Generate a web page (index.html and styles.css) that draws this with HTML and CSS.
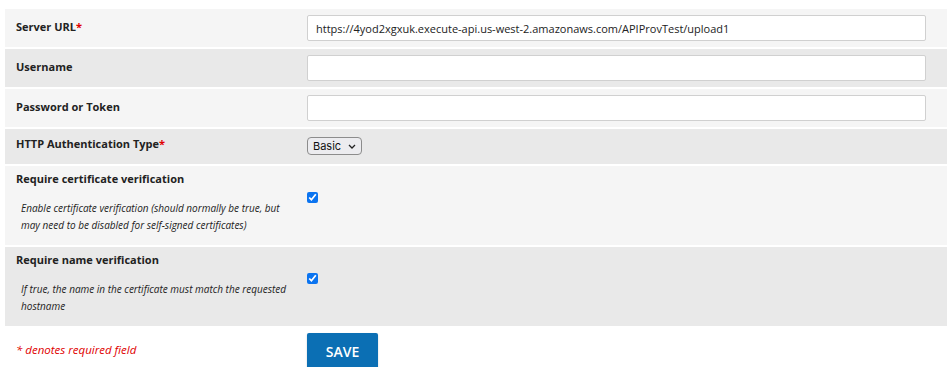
FILE: index.html
```html
<!DOCTYPE html>
<html lang="en">
<head>
    <meta charset="UTF-8">
    <title>Endpoint settings</title>
    <link rel="stylesheet" href="styles.css">
</head>
<body>
    <form class="settings">
        <div class="row light">
            <div class="label">Server URL<span class="req">*</span></div>
            <div class="field"><input class="text" type="text" value="https://4yod2xgxuk.execute-api.us-west-2.amazonaws.com/APIProvTest/upload1"></div>
        </div>

        <div class="row dark">
            <div class="label">Username</div>
            <div class="field"><input class="text" type="text"></div>
        </div>

        <div class="row light">
            <div class="label">Password or Token</div>
            <div class="field"><input class="text" type="password"></div>
        </div>

        <div class="row dark auth">
            <div class="label">HTTP Authentication Type<span class="req">*</span></div>
            <div class="field">
                <div class="select-wrap">
                    <select class="select">
                        <option>Basic</option>
                        <option>Digest</option>
                    </select>
                    <svg class="chevron" width="8" height="5" viewBox="0 0 8 5"><path d="M1 1l3 3 3-3" fill="none" stroke="#222" stroke-width="1.3"/></svg>
                </div>
            </div>
        </div>

        <div class="row light check">
            <div class="label">
                Require certificate verification
                <div class="desc">Enable certificate verification (should normally be true, but may need to be disabled for self-signed certificates)</div>
            </div>
            <div class="field"><input class="box" type="checkbox" checked></div>
        </div>

        <div class="row dark check">
            <div class="label">
                Require name verification
                <div class="desc">If true, the name in the certificate must match the requested hostname</div>
            </div>
            <div class="field"><input class="box" type="checkbox" checked></div>
        </div>

        <div class="row footer">
            <div class="label note">* denotes required field</div>
            <div class="field"><button class="btn-save" type="button">SAVE</button></div>
        </div>
    </form>
</body>
</html>
```

FILE: styles.css
```css
body {
    font-family: 'Open Sans', 'Noto Sans', sans-serif;
    margin: 0;
    padding: 0;
    background-color: #fff;
    color: #222;
}

.settings {
    padding: 9px 0 0 5px;
}

.row {
    display: grid;
    grid-template-columns: 302px 1fr;
    align-items: center;
    padding: 6px 21px 6px 0;
    margin-bottom: 2px;
}

.row.light {
    background-color: #f5f5f5;
}

.row.dark {
    background-color: #e9e9e9;
}

.label {
    padding: 0 0 4px 11px;
    font-size: 11px;
    line-height: 15px;
    font-weight: 700;
}

.field {
    display: flex;
    align-items: flex-start;
}

.req {
    color: #e00000;
}

.text {
    box-sizing: border-box;
    width: 100%;
    height: 26px;
    margin: 0;
    padding: 0 8px;
    border: 1px solid #d0d0d0;
    border-radius: 2px;
    background-color: #fff;
    font-family: inherit;
    font-size: 11px;
    color: #222;
}

.row.auth {
    padding: 7px 21px 9px 0;
}

.row.auth .label {
    padding-bottom: 4px;
}

.select-wrap {
    position: relative;
    display: flex;
}

.select {
    appearance: none;
    -webkit-appearance: none;
    box-sizing: border-box;
    width: 55px;
    height: 18px;
    margin: 0;
    padding: 0 0 0 5px;
    border: 1px solid #8c8c8c;
    border-radius: 4px;
    background-color: #ececef;
    font-family: 'Inter', 'Liberation Sans', sans-serif;
    font-size: 11px;
    color: #111;
}

.chevron {
    position: absolute;
    right: 6px;
    top: 7px;
    pointer-events: none;
}

.row.check {
    align-items: start;
    padding: 5px 21px 11px 0;
}

.row.check .label {
    padding-bottom: 0;
}

.desc {
    margin-top: 14px;
    padding: 0 6px 0 5px;
    font-size: 10px;
    line-height: 17px;
    font-weight: 400;
    font-style: italic;
}

.box {
    width: 11px;
    height: 11px;
    margin: 21px 0 0 0;
    accent-color: #0b74f0;
}

.row.footer {
    padding: 5px 21px 0 0;
    margin: 0;
}

.note {
    font-size: 11.5px;
    font-weight: 400;
    font-style: italic;
    color: #e00000;
}

.btn-save {
    width: 71px;
    height: 36px;
    border: none;
    border-radius: 2px;
    background-color: #0b6fb4;
    box-shadow: 0 1px 2px rgba(0, 0, 0, 0.2);
    color: #fff;
    font-family: inherit;
    font-size: 14px;
    font-weight: 600;
    cursor: pointer;
}
```
